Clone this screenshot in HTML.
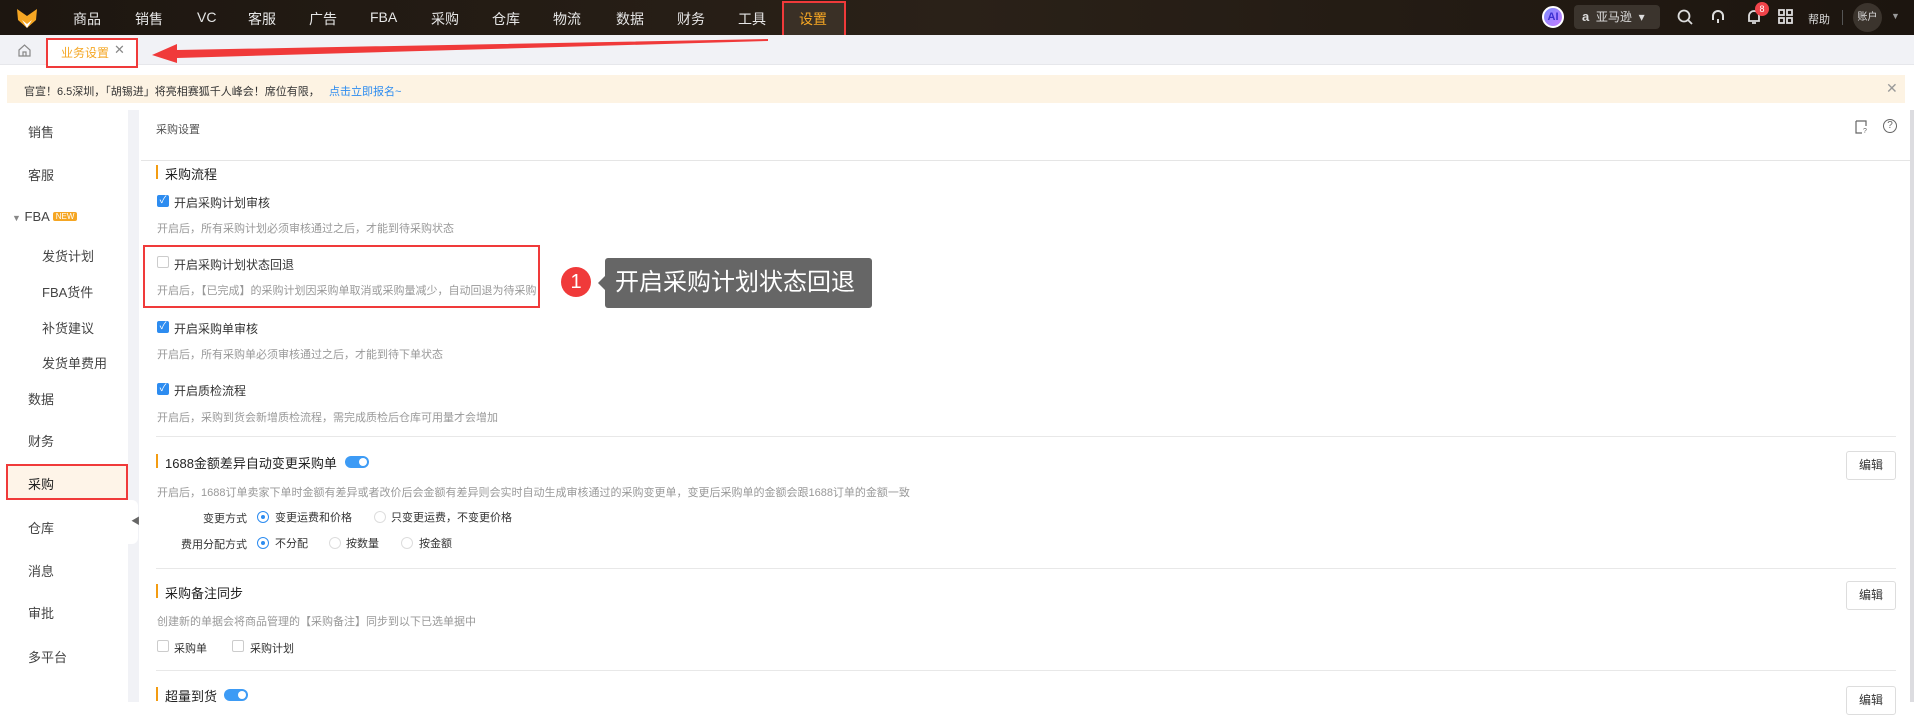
<!DOCTYPE html>
<html><head><meta charset="utf-8"><style>
*{margin:0;padding:0;box-sizing:border-box}
body{width:1914px;height:702px;overflow:hidden;background:#fff;font-family:"Liberation Sans","Noto Sans CJK SC",sans-serif;position:relative;color:#333}
.a{position:absolute;white-space:nowrap}
.top{left:0;top:0;width:1914px;height:35px;background:linear-gradient(90deg,#1d1610,#2a2118 50%,#1c150f)}
.nav{top:9px;font-size:14px;color:#e6e6e6}
.tabbar{left:0;top:35px;width:1914px;height:30px;background:#f1f2f6;border-bottom:1px solid #e6e7eb}
.notice{left:7px;top:75px;width:1898px;height:28px;background:#fdf3e3}
.side{font-size:13px;color:#444}
.sub{font-size:13px;color:#444}
.t{font-size:12px;color:#333}
.d{font-size:11px;color:#999}
.h{font-size:13px;color:#222}
.bar{width:2px;height:14px;background:#f39c12}
.cb{width:12px;height:12px;border:1px solid #ccc;border-radius:2px;background:#fff}
.cbo{width:12px;height:12px;border-radius:2px;background:#2d8cf0;color:#fff;font-size:10px;line-height:12px;text-align:center}
.rd{width:12px;height:12px;border:1px solid #ddd;border-radius:50%;background:#fff}
.rdo{width:12px;height:12px;border:1px solid #2d8cf0;border-radius:50%;background:#fff}
.rdo::after{content:"";position:absolute;left:3px;top:3px;width:4px;height:4px;border-radius:50%;background:#2d8cf0}
.hr{height:1px;background:#e8e8e8;left:156px;width:1740px}
.btn{width:50px;height:29px;border:1px solid #ddd;border-radius:3px;font-size:12px;text-align:center;line-height:27px;color:#333;background:#fff}
.tg{width:24px;height:12px;border-radius:6px;background:#3d9bf5}
.tg::after{content:"";position:absolute;right:2px;top:2px;width:8px;height:8px;border-radius:50%;background:#fff}
.red{border:2px solid #f03a3a}
</style></head><body>
<div class="a top"></div>
<svg class="a" style="left:16px;top:7px" width="22" height="22" viewBox="0 0 22 22"><path d="M1 2 L11 9 L21 2 L20 13 L11 21 L2 13Z" fill="#f5a623"/><path d="M6 13 L11 17 L16 13 L11 21Z" fill="#fff"/></svg>
<div class="a nav" style="left:73px">商品</div>
<div class="a nav" style="left:135px">销售</div>
<div class="a nav" style="left:197px">VC</div>
<div class="a nav" style="left:248px">客服</div>
<div class="a nav" style="left:309px">广告</div>
<div class="a nav" style="left:370px">FBA</div>
<div class="a nav" style="left:431px">采购</div>
<div class="a nav" style="left:492px">仓库</div>
<div class="a nav" style="left:553px">物流</div>
<div class="a nav" style="left:616px">数据</div>
<div class="a nav" style="left:677px">财务</div>
<div class="a nav" style="left:738px">工具</div>
<div class="a" style="left:784px;top:2px;width:61px;height:33px;background:#3a3026"></div>
<div class="a nav" style="left:799px;color:#f5a623">设置</div>
<div class="a red" style="left:782px;top:1px;width:64px;height:36px"></div>
<div class="a" style="left:1542px;top:6px;width:22px;height:22px;border-radius:50%;background:linear-gradient(135deg,#7c8cff,#c77dff);color:#3a2fd0;font-size:11px;font-weight:bold;text-align:center;line-height:18px;border:2px solid #fff">AI</div>
<div class="a" style="left:1574px;top:5px;width:86px;height:24px;background:#3b342d;border-radius:4px;color:#ddd;font-size:12px;line-height:24px;padding-left:8px"><b style="font-size:13px">a</b>&nbsp; 亚马逊 &nbsp;▾</div>
<svg class="a" style="left:1677px;top:9px" width="16" height="16"><circle cx="7" cy="7" r="5.5" stroke="#ddd" stroke-width="1.8" fill="none"/><path d="M11 11 L15 15" stroke="#ddd" stroke-width="1.8"/></svg>
<svg class="a" style="left:1710px;top:9px" width="16" height="16"><path d="M3 11 V7 A5 5 0 0 1 13 7 V11" stroke="#ddd" stroke-width="2" fill="none"/><path d="M8 14 V10" stroke="#ddd" stroke-width="2"/></svg>
<svg class="a" style="left:1746px;top:9px" width="16" height="16"><path d="M3 12 V7 A5 5 0 0 1 13 7 V12 Z M6 14 H10" stroke="#ddd" stroke-width="1.8" fill="none"/></svg>
<div class="a" style="left:1755px;top:2px;width:14px;height:14px;border-radius:50%;background:#f0444a;color:#fff;font-size:9px;text-align:center;line-height:14px">8</div>
<svg class="a" style="left:1778px;top:9px" width="15" height="15"><g fill="none" stroke="#ddd" stroke-width="1.8"><rect x="1" y="1" width="5" height="5"/><rect x="9" y="1" width="5" height="5"/><rect x="1" y="9" width="5" height="5"/><rect x="9" y="9" width="5" height="5"/></g></svg>
<div class="a" style="left:1808px;top:11px;font-size:11px;color:#ddd">帮助</div>
<div class="a" style="left:1842px;top:10px;width:1px;height:15px;background:#555"></div>
<div class="a" style="left:1853px;top:3px;width:29px;height:29px;border-radius:50%;background:#3b342d;color:#ddd;font-size:10px;text-align:center;line-height:29px">账户</div>
<div class="a" style="left:1891px;top:11px;font-size:9px;color:#999">▼</div>

<div class="a tabbar"></div>
<svg class="a" style="left:18px;top:44px" width="13" height="13"><path d="M1 6 L6.5 1 L12 6 V12 H1Z M5 12 V8 H8 V12" stroke="#888" stroke-width="1.2" fill="none"/></svg>
<div class="a" style="left:47px;top:39px;width:89px;height:27px;background:#fff"></div>
<div class="a" style="left:61px;top:44px;font-size:12px;color:#f5a623">业务设置</div>
<div class="a" style="left:114px;top:42px;font-size:13px;color:#888">✕</div>
<div class="a red" style="left:46px;top:38px;width:92px;height:30px"></div>
<svg class="a" style="left:150px;top:30px" width="630" height="40"><polygon points="618,9 27,20 27,14 2,25 27,33 27,28 618,11" fill="#f03a3a"/></svg>

<div class="a notice"></div>
<div class="a" style="left:24px;top:83px;font-size:11px;color:#333">官宣！6.5深圳，「胡锡进」将亮相赛狐千人峰会！席位有限， &nbsp; <span style="color:#2d8cf0">点击立即报名~</span></div>
<div class="a" style="left:1886px;top:80px;font-size:14px;color:#999">✕</div>

<div class="a" style="left:128px;top:110px;width:11px;height:592px;background:#f1f2f6"></div>
<div class="a" style="left:128px;top:500px;width:10px;height:44px;background:#fff;border-radius:0 6px 6px 0"></div>
<div class="a" style="left:131px;top:514px;font-size:9px;color:#666">◀</div>
<div class="a side" style="left:28px;top:122px">销售</div>
<div class="a side" style="left:28px;top:165px">客服</div>
<div class="a side" style="left:12px;top:209px"><span style="font-size:9px;color:#888">▼</span> FBA <span style="background:#f5a623;color:#fff;font-size:8px;padding:0 3px;border-radius:2px;vertical-align:2px">NEW</span></div>
<div class="a sub" style="left:42px;top:246px">发货计划</div>
<div class="a sub" style="left:42px;top:282px">FBA货件</div>
<div class="a sub" style="left:42px;top:318px">补货建议</div>
<div class="a sub" style="left:42px;top:353px">发货单费用</div>
<div class="a side" style="left:28px;top:389px">数据</div>
<div class="a side" style="left:28px;top:431px">财务</div>
<div class="a" style="left:6px;top:464px;width:121px;height:35px;background:#fef4e8"></div>
<div class="a side" style="left:28px;top:474px;color:#222">采购</div>
<div class="a red" style="left:6px;top:464px;width:122px;height:36px"></div>
<div class="a side" style="left:28px;top:518px">仓库</div>
<div class="a side" style="left:28px;top:561px">消息</div>
<div class="a side" style="left:28px;top:603px">审批</div>
<div class="a side" style="left:28px;top:647px">多平台</div>

<div class="a" style="left:156px;top:121px;font-size:11px;color:#555">采购设置</div>
<svg class="a" style="left:1855px;top:120px" width="13" height="14"><path d="M1 1 H11 V6 M1 1 V13 H7" stroke="#666" stroke-width="1.2" fill="none"/><text x="8" y="13" font-size="7" fill="#666">?</text></svg>
<div class="a" style="left:1883px;top:119px;width:14px;height:14px;border:1.3px solid #666;border-radius:50%;font-size:10px;text-align:center;line-height:12px;color:#666">?</div>
<div class="a" style="left:141px;top:160px;width:1769px;height:1px;background:#e5e5e5"></div>
<div class="a" style="left:1910px;top:110px;width:4px;height:592px;background:#dcdce0"></div>

<div class="a bar" style="left:156px;top:165px"></div>
<div class="a h" style="left:165px;top:164px">采购流程</div>
<div class="a cbo" style="left:157px;top:195px">✓</div><div class="a t" style="left:174px;top:194px">开启采购计划审核</div>
<div class="a d" style="left:157px;top:220px">开启后，所有采购计划必须审核通过之后，才能到待采购状态</div>
<div class="a cb" style="left:157px;top:256px"></div><div class="a t" style="left:174px;top:256px">开启采购计划状态回退</div>
<div class="a d" style="left:157px;top:282px">开启后，【已完成】的采购计划因采购单取消或采购量减少，自动回退为待采购</div>
<div class="a red" style="left:143px;top:245px;width:397px;height:63px"></div>
<div class="a" style="left:561px;top:267px;width:30px;height:30px;border-radius:50%;background:#f03a3a;color:#fff;font-size:20px;text-align:center;line-height:30px">1</div>
<div class="a" style="left:605px;top:258px;width:267px;height:50px;background:#666;border-radius:3px;color:#fff;font-size:24px;line-height:50px;padding-left:10px">开启采购计划状态回退</div>
<div class="a" style="left:598px;top:276px;width:0;height:0;border-top:7px solid transparent;border-bottom:7px solid transparent;border-right:7px solid #666"></div>
<div class="a cbo" style="left:157px;top:321px">✓</div><div class="a t" style="left:174px;top:320px">开启采购单审核</div>
<div class="a d" style="left:157px;top:346px">开启后，所有采购单必须审核通过之后，才能到待下单状态</div>
<div class="a cbo" style="left:157px;top:383px">✓</div><div class="a t" style="left:174px;top:382px">开启质检流程</div>
<div class="a d" style="left:157px;top:409px">开启后，采购到货会新增质检流程，需完成质检后仓库可用量才会增加</div>
<div class="a hr" style="top:436px"></div>

<div class="a bar" style="left:156px;top:454px"></div>
<div class="a h" style="left:165px;top:453px">1688金额差异自动变更采购单</div>
<div class="a tg" style="left:345px;top:456px"></div>
<div class="a btn" style="left:1846px;top:451px">编辑</div>
<div class="a d" style="left:157px;top:484px">开启后，1688订单卖家下单时金额有差异或者改价后会金额有差异则会实时自动生成审核通过的采购变更单，变更后采购单的金额会跟1688订单的金额一致</div>
<div class="a t" style="left:203px;top:510px;font-size:11px">变更方式</div>
<div class="a rdo" style="left:257px;top:511px"></div><div class="a t" style="left:275px;top:509px;font-size:11px">变更运费和价格</div>
<div class="a rd" style="left:374px;top:511px"></div><div class="a t" style="left:391px;top:509px;font-size:11px">只变更运费，不变更价格</div>
<div class="a t" style="left:181px;top:536px;font-size:11px">费用分配方式</div>
<div class="a rdo" style="left:257px;top:537px"></div><div class="a t" style="left:275px;top:535px;font-size:11px">不分配</div>
<div class="a rd" style="left:329px;top:537px"></div><div class="a t" style="left:346px;top:535px;font-size:11px">按数量</div>
<div class="a rd" style="left:401px;top:537px"></div><div class="a t" style="left:419px;top:535px;font-size:11px">按金额</div>
<div class="a hr" style="top:568px"></div>

<div class="a bar" style="left:156px;top:584px"></div>
<div class="a h" style="left:165px;top:583px">采购备注同步</div>
<div class="a btn" style="left:1846px;top:581px">编辑</div>
<div class="a d" style="left:157px;top:613px">创建新的单据会将商品管理的【采购备注】同步到以下已选单据中</div>
<div class="a cb" style="left:157px;top:640px"></div><div class="a t" style="left:174px;top:640px;font-size:11px">采购单</div>
<div class="a cb" style="left:232px;top:640px"></div><div class="a t" style="left:250px;top:640px;font-size:11px">采购计划</div>
<div class="a hr" style="top:670px"></div>

<div class="a bar" style="left:156px;top:687px"></div>
<div class="a h" style="left:165px;top:686px">超量到货</div>
<div class="a tg" style="left:224px;top:689px"></div>
<div class="a btn" style="left:1846px;top:686px">编辑</div>
</body></html>
